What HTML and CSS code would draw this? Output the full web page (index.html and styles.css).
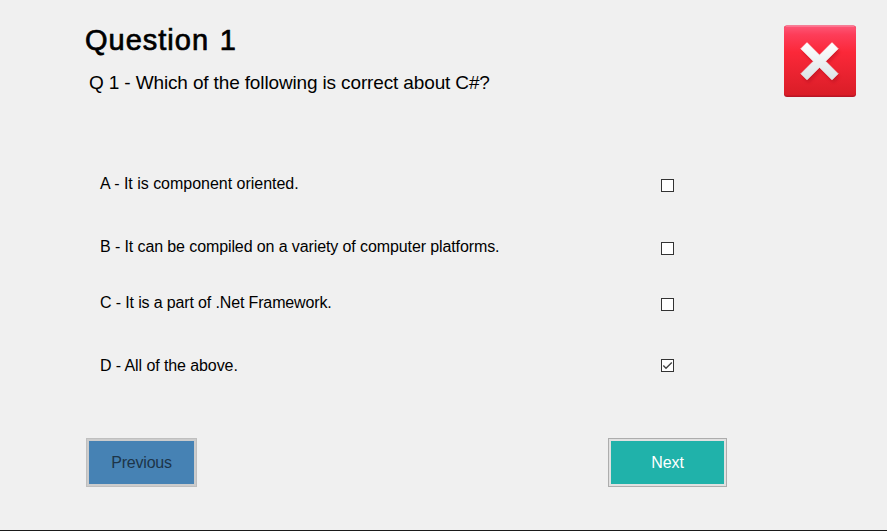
FILE: index.html
```html
<!DOCTYPE html>
<html lang="en">
<head>
<meta charset="utf-8">
<title>Question 1</title>
<link rel="stylesheet" href="styles.css">
</head>
<body>
<main class="quiz">
  <header class="header">
    <div>
      <h1 class="title">Question 1</h1>
      <p class="question">Q 1 - Which of the following is correct about C#?</p>
    </div>
    <button class="close" aria-label="Close">
      <svg width="74" height="75" viewBox="0 0 74 75">
        <defs>
          <linearGradient id="red" x1="0" y1="0" x2="0" y2="1">
            <stop offset="0" stop-color="#fd5878"/>
            <stop offset=".13" stop-color="#fd3d59"/>
            <stop offset=".38" stop-color="#fb2839"/>
            <stop offset="1" stop-color="#d91d27"/>
          </linearGradient>
          <linearGradient id="white" x1="0" y1="0" x2="0" y2="1">
            <stop offset="0" stop-color="#ffffff"/>
            <stop offset="1" stop-color="#dce4e7"/>
          </linearGradient>
          <filter id="soft" x="-30%" y="-30%" width="160%" height="160%"><feGaussianBlur stdDeviation="1.8"/></filter>
        </defs>
        <rect x="1" y="1.5" width="72" height="71.5" rx="3" fill="#b91525"/>
        <rect x="1" y="1.5" width="72" height="70" rx="3" fill="url(#red)"/>
        <path d="M3 2H71" stroke="#ff91aa"/>
        <path d="M24.5 18L37 30.5 49.5 18 55.5 24 43 36.5 55.5 49 49.5 55 37 42.5 24.5 55 18.5 49 31 36.5 18.5 24Z" transform="translate(1 4)" fill="#a50d1b" opacity=".4" filter="url(#soft)"/>
        <path d="M24.5 18L37 30.5 49.5 18 55.5 24 43 36.5 55.5 49 49.5 55 37 42.5 24.5 55 18.5 49 31 36.5 18.5 24Z" transform="translate(-.5 .7)" fill="url(#white)" stroke="url(#white)" stroke-width="1" stroke-linejoin="round"/>
      </svg>
    </button>
  </header>
  <section class="answers">
    <label class="answer"><span class="text a">A - It is component oriented.</span><input class="check" type="checkbox"></label>
    <label class="answer"><span class="text b">B - It can be compiled on a variety of computer platforms.</span><input class="check" type="checkbox"></label>
    <label class="answer"><span class="text c">C - It is a part of .Net Framework.</span><input class="check" type="checkbox"></label>
    <label class="answer last"><span class="text d">D - All of the above.</span><span class="check"><svg width="11" height="11" viewBox="0 0 11 11"><path d="M1.3 5.5L4 8.2 9.8 2.4" fill="none" stroke="#444" stroke-width="1.4"/></svg></span></label>
  </section>
  <footer class="actions">
    <button class="btn previous">Previous</button>
    <button class="btn next">Next</button>
  </footer>
</main>
</body>
</html>
```
FILE: styles.css
```css
* { box-sizing: border-box; }
body { margin: 0; background: #f0f0f0; color: #000; font-family: "Liberation Sans", Arial, sans-serif; }
.quiz { height: 531px; border-bottom: 1px solid #1a1a1a; overflow: hidden; }
.header { display: flex; justify-content: space-between; height: 169px; padding: 24px 30px 0 85px; }
.title { margin: 0; font-size: 29px; line-height: 32px; font-weight: 400; letter-spacing: 1px; word-spacing: 1.5px; -webkit-text-stroke: .7px #000; }
.question { margin: 16px 0 0 4px; font-size: 19px; line-height: 22px; letter-spacing: -.14px; white-space: nowrap; }
.close { width: 74px; height: 75px; padding: 0; border: 0; background: none; }
.close svg { display: block; }
.answers { display: grid; grid-template-rows: 63px 56px 63px 87px; padding-left: 100px; }
.answer { display: flex; justify-content: space-between; align-items: flex-start; width: 574px; padding-top: 5px; }
.text { font-size: 16px; line-height: 20px; white-space: nowrap; }
.a { letter-spacing: -.02px; }
.b { letter-spacing: -.105px; }
.c { letter-spacing: -.14px; }
.d { letter-spacing: -.09px; }
.check { appearance: none; width: 13px; height: 13px; margin: 5px 0 0; border: 1px solid #333; background: #fff; }
.last .check { margin-top: 3px; }
.check svg { display: block; }
.actions { display: flex; justify-content: space-between; width: 727px; padding-left: 86px; }
.btn { height: 49px; padding: 0; border: 1px solid; font: 16px "Liberation Sans", Arial, sans-serif; }
.previous { width: 111px; border-color: #bfbfbf; background: #4682b4; box-shadow: inset 0 0 0 2px #ccc; color: #1d3549; letter-spacing: -.2px; }
.next { width: 119px; border-color: #adadad; background: #20b2aa; box-shadow: inset 0 0 0 2px #e1e1e1; color: #fff; letter-spacing: -.1px; }
```
